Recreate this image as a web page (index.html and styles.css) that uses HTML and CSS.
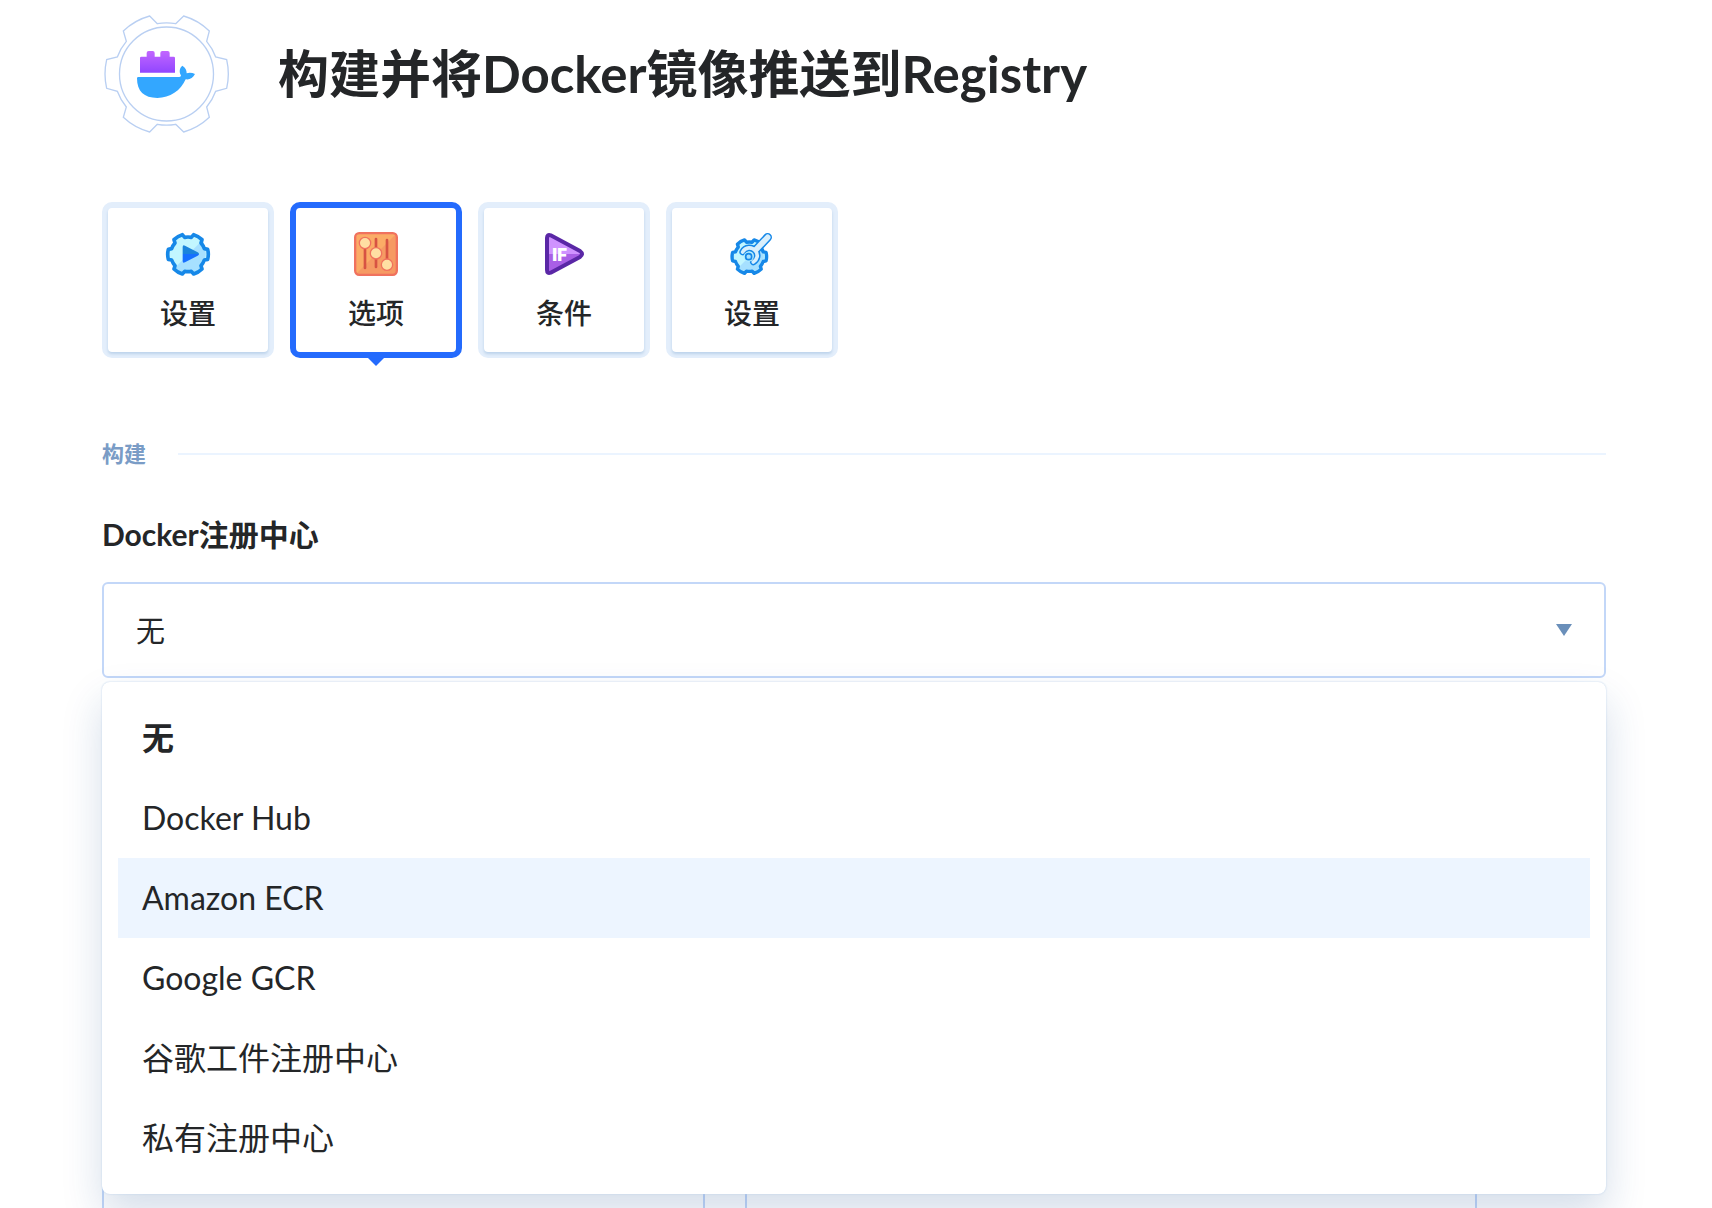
FILE: index.html
```html
<!DOCTYPE html>
<html lang="zh-CN">
<head>
<meta charset="utf-8">
<meta name="viewport" content="width=device-width, initial-scale=1">
<title>构建并将Docker镜像推送到Registry</title>
<link rel="stylesheet" href="styles.css">
</head>
<body>
<svg class="defs" aria-hidden="true">
  <defs>
    <path id="cog" d="M59 -15A61 61 0 0 1 59 15L49 17A52 52 0 0 1 39 34L42 44A61 61 0 0 1 17 59L10 51A52 52 0 0 1 -10 51L-17 59A61 61 0 0 1 -42 44L-39 34A52 52 0 0 1 -49 17L-59 15A61 61 0 0 1 -59 -15L-49 -17A52 52 0 0 1 -39 -34L-42 -44A61 61 0 0 1 -17 -59L-10 -51A52 52 0 0 1 10 -51L17 -59A61 61 0 0 1 42 -44L39 -34A52 52 0 0 1 49 -17Z"/>
    <linearGradient id="brick" x1="0" y1="0" x2="0" y2="1">
      <stop offset="0" stop-color="#c266ff"/><stop offset="1" stop-color="#9146ff"/>
    </linearGradient>
  </defs>
</svg>
<main class="page">
  <header class="header">
    <svg class="logo" viewBox="36 42 384 360" aria-hidden="true">
      <g fill="none" stroke="#b9cff2" stroke-width="4">
        <path d="M179 48L202 71A154 154 0 0 1 257 71L281 48A183 183 0 0 1 358 93L350 124A154 154 0 0 1 377 171L410 179A190 190 0 0 1 410 265L377 274A154 154 0 0 1 350 321L358 352A183 183 0 0 1 281 396L257 373A154 154 0 0 1 202 373L179 396A183 183 0 0 1 100 352L109 321A154 154 0 0 1 82 274L50 265A190 190 0 0 1 50 179L82 171A154 154 0 0 1 109 124L100 93A183 183 0 0 1 179 48Z"/>
        <circle cx="229.500" cy="222" r="141"/>
      </g>
      <path fill="url(#brick)" d="M150 218V174Q150 170 154 170H170V159Q170 153 176 153H188Q194 153 194 159V170H211V159Q211 153 217 153H233Q239 153 239 159V170H251Q255 170 255 174V218Z"/>
      <path fill="#33a7ff" d="M141 235Q141 231 145 231H268Q273 231 273 226C267 217 268 204 277 197C286 203 290 210 290 220C297 217 307 218 315 222C309 234 299 240 287 238C272 272 240 294 202 294C162 294 141 274 141 235Z"/>
    </svg>
    <h1 class="title">构建并将Docker镜像推送到Registry</h1>
  </header>

  <nav class="tabs" aria-label="步骤">
    <button class="tab" type="button">
      <svg class="tab-icon" viewBox="0 0 132 132" aria-hidden="true">
        <use href="#cog" x="66" y="67" fill="#c2f6ff"/>
        <path d="M110 24L24 110Q67 136 106 108Q130 70 110 24Z" fill="#a6e0ff"/>
        <use href="#cog" x="66" y="67" fill="none" stroke="#1688e8" stroke-width="11" stroke-linejoin="round"/>
        <path d="M50 66V45Q50 38 57 41L95 61Q99 63 99 66Z" fill="#1a84dc"/>
        <path d="M50 66V87Q50 95 57 91L95 71Q99 69 99 66Z" fill="#156fff"/>
      </svg>
      <span>设置</span>
    </button>
    <button class="tab tab-active" type="button" aria-current="step">
      <svg class="tab-icon" viewBox="0 0 132 132" aria-hidden="true">
        <rect x="3.500" y="3.500" width="125" height="125" rx="12" fill="#fbac66"/>
        <path d="M126 6V126H6Z" fill="#f69a63"/>
        <rect x="3.500" y="3.500" width="125" height="125" rx="12" fill="none" stroke="#f0725e" stroke-width="7"/>
        <path d="M33 40V108M66 21V105M99 24V95" stroke="#d75343" stroke-width="8" stroke-linecap="round"/>
        <g fill="#ffdfa3" stroke="#f0725e" stroke-width="4">
          <circle cx="33" cy="33" r="17"/><circle cx="66" cy="64" r="17"/><circle cx="99" cy="98" r="17"/>
        </g>
      </svg>
      <span>选项</span>
    </button>
    <button class="tab" type="button">
      <svg class="tab-icon" viewBox="0 0 132 132" aria-hidden="true">
        <path d="M16 66V18Q16 6 27 10L114 57Q120 61 120 66Z" fill="#cf92ff"/>
        <path d="M16 66V114Q16 126 27 122L114 75Q120 71 120 66Z" fill="#a95fe6"/>
        <path d="M15 18Q15 6 26 10L114 57Q126 66 114 75L26 122Q15 126 15 114Z" fill="none" stroke="#5a27a6" stroke-width="12" stroke-linejoin="round"/>
        <text class="if-label" x="31" y="87">IF</text>
      </svg>
      <span>条件</span>
    </button>
    <button class="tab" type="button">
      <svg class="tab-icon" viewBox="0 0 132 132" aria-hidden="true">
        <g transform="translate(58 74) scale(.85)">
          <use href="#cog" fill="#c2f6ff"/>
          <path d="M40 -40L-40 40Q0 68 40 42Q62 0 40 -40Z" fill="#a6e0ff"/>
          <use href="#cog" fill="none" stroke="#1688e8" stroke-width="12" stroke-linejoin="round"/>
        </g>
        <g fill="none" stroke-linecap="round" stroke-linejoin="round">
          <path d="M113 16L80 51" stroke="#1688e8" stroke-width="26"/>
          <path d="M38 60C46 44 66 44 76 56C86 68 82 82 70 90" stroke="#1688e8" stroke-width="20"/>
          <path d="M38 60C46 44 66 44 76 56C86 68 82 82 70 90" stroke="#d9effc" stroke-width="11"/>
          <path d="M113 16L78 53" stroke="#d9effc" stroke-width="17"/>
        </g>
        <circle cx="56" cy="74" r="15" fill="#b4ecff"/>
        <circle cx="56" cy="74" r="9" fill="#a6e0ff" stroke="#1688e8" stroke-width="5"/>
      </svg>
      <span>设置</span>
    </button>
  </nav>

  <h2 class="section">构建</h2>

  <form class="form">
    <div class="field">
      <label class="label" for="registry">Docker注册中心</label>
      <div class="picker">
        <div class="control">
          <select class="select" id="registry">
            <option selected>无</option>
            <option>Docker Hub</option>
            <option>Amazon ECR</option>
            <option>Google GCR</option>
            <option>谷歌工件注册中心</option>
            <option>私有注册中心</option>
          </select>
          <svg class="caret" viewBox="0 0 16 12" aria-hidden="true"><path d="M0 0H16L8 12Z"/></svg>
        </div>
        <ul class="menu" role="listbox" aria-label="Docker注册中心">
          <li class="item item-selected" role="option" aria-selected="true">无</li>
          <li class="item" role="option">Docker Hub</li>
          <li class="item item-hover" role="option">Amazon ECR</li>
          <li class="item" role="option">Google GCR</li>
          <li class="item" role="option">谷歌工件注册中心</li>
          <li class="item" role="option">私有注册中心</li>
        </ul>
      </div>
    </div>
    <div class="row">
      <input class="input" type="text">
      <input class="input" type="text">
    </div>
  </form>
</main>
</body>
</html>
```
FILE: styles.css
```css
* {
  box-sizing: border-box;
}

body {
  margin: 0;
  background: #fff;
  color: #242628;
  font-family: Lato, "Noto Sans CJK SC", sans-serif;
}

.defs {
  position: absolute;
  width: 0;
  height: 0;
}

.page {
  height: 100vh;
  overflow: hidden;
  padding: 14px 106px 0 102px;
}

.header {
  display: flex;
  align-items: center;
  gap: 48px;
  height: 120px;
}

.logo {
  flex: none;
  width: 128px;
  height: 120px;
}

.title {
  margin: 0;
  font-size: 51px;
  line-height: 60px;
  font-weight: 700;
}

.tabs {
  display: flex;
  gap: 16px;
  margin-top: 68px;
}

.tab {
  position: relative;
  display: flex;
  flex-direction: column;
  align-items: center;
  gap: 17px;
  width: 172px;
  height: 156px;
  padding: 24px 0 0;
  border: 6px solid #e3eefb;
  border-radius: 10px;
  background: #fff;
  color: inherit;
  font-family: inherit;
  font-size: 28px;
  line-height: 40px;
  font-weight: 500;
}

.tab::before {
  content: "";
  position: absolute;
  inset: 0;
  border-radius: 4px;
  box-shadow: 0 2px 3px #bcd2ea;
}

.tab-active {
  border-color: #246bfd;
}

.tab-active::before {
  box-shadow: none;
}

.tab-active::after {
  content: "";
  position: absolute;
  top: 100%;
  left: 50%;
  width: 28px;
  height: 14px;
  transform: translateX(-50%);
  background: #246bfd;
  clip-path: polygon(0 0, 100% 0, 50% 100%);
}

.tab-icon {
  width: 44px;
  height: 44px;
  overflow: visible;
}

.if-label {
  fill: #fff;
  font-family: Inter, sans-serif;
  font-size: 50px;
  font-weight: 900;
}

.section {
  display: flex;
  align-items: center;
  gap: 32px;
  margin: 80px 0 0;
  color: #7a9cc6;
  font-size: 22px;
  line-height: 32px;
  font-weight: 700;
}

.section::after {
  content: "";
  flex: 1;
  height: 2px;
  background: #ebf4ff;
}

.label {
  display: block;
  margin-top: 42px;
  font-size: 30px;
  line-height: 44px;
  font-weight: 700;
}

.picker {
  position: relative;
  margin-top: 26px;
}

.control {
  display: grid;
  align-items: center;
}

.select,
.caret {
  grid-area: 1 / 1;
}

.select {
  appearance: none;
  width: 100%;
  height: 96px;
  padding: 0 32px;
  border: 2px solid #c3d7f8;
  border-radius: 6px;
  background: #fff;
  color: inherit;
  font-family: inherit;
  font-size: 29px;
}

.caret {
  justify-self: end;
  width: 16px;
  height: 12px;
  margin-right: 34px;
  fill: #6a8fba;
  pointer-events: none;
}

.menu {
  position: absolute;
  top: 100%;
  left: 0;
  right: 0;
  margin: 4px 0 0;
  padding: 16px;
  border-radius: 8px;
  background: #fff;
  list-style: none;
  box-shadow: 0 0 2px #b9d0ea, 0 20px 40px rgba(20, 70, 140, .18);
}

.item {
  padding: 0 24px;
  font-size: 32px;
  line-height: 80px;
}

.item-selected {
  font-weight: 700;
}

.item-hover {
  background: #edf5ff;
}

.row {
  display: grid;
  grid-template-columns: 603fr 732fr 89fr;
  gap: 40px;
  margin-top: 460px;
}

.input {
  width: 100%;
  height: 96px;
  border: 2px solid #c3d7f8;
  border-radius: 6px;
  background: #fff;
}
```
